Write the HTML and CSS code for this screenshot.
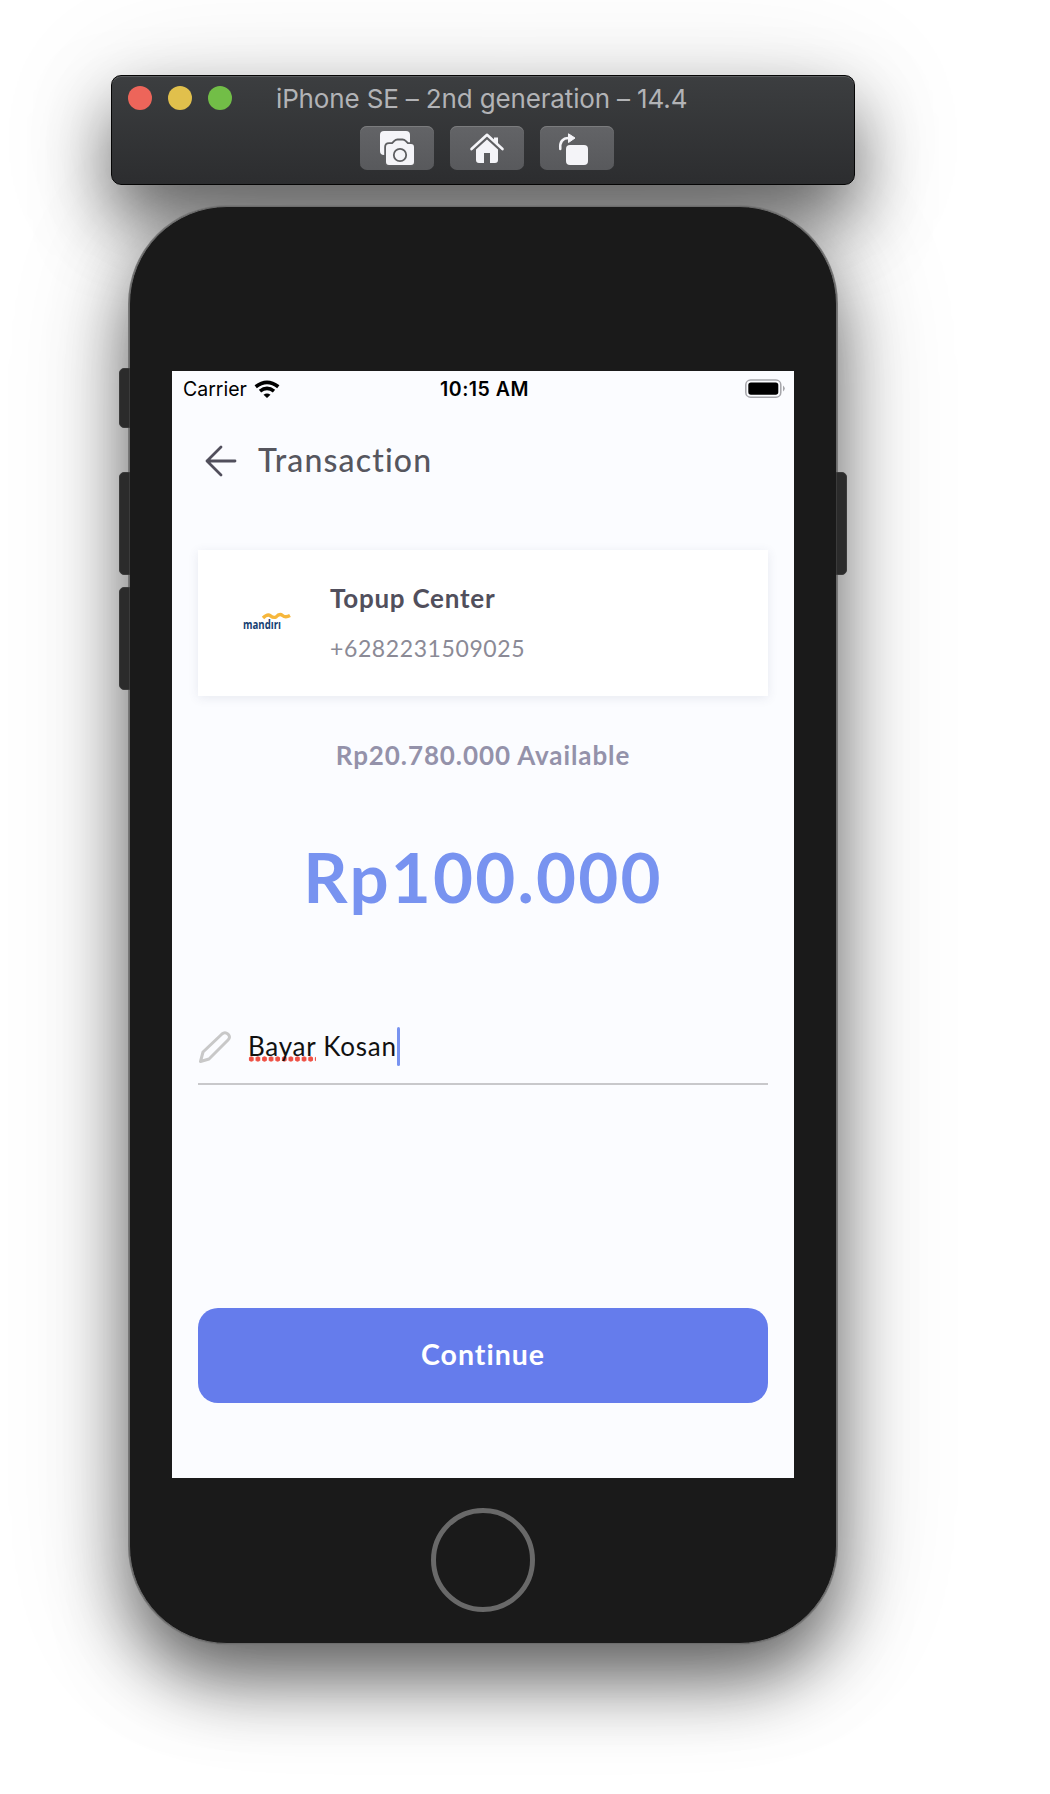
FILE: index.html
```html
<!DOCTYPE html>
<html lang="id">
<head>
<meta charset="utf-8">
<title>Transaction</title>
<link rel="stylesheet" href="styles.css">
</head>
<body>
<main class="simulator">
  <header class="toolbar">
    <div class="titlebar">
      <div class="lights"><i class="light red"></i><i class="light yellow"></i><i class="light green"></i></div>
      <h1 class="device-name">iPhone SE – 2nd generation – 14.4</h1>
    </div>
    <div class="tools">
      <button class="tool" aria-label="Screenshot">
        <svg width="74" height="44" viewBox="0 0 74 44"><rect x="20" y="5" width="30" height="24" rx="4" fill="#f4f4f8"/><path d="M29 18h3.500l2.500-2.600q1-1 2.500-1h5q1.500 0 2.500 1l2.500 2.600H51q3 0 3 3v15q0 3-3 3H29q-3 0-3-3V21q0-3 3-3z" fill="#f4f4f8" stroke="#5d5e61" stroke-width="3.600" paint-order="stroke"/><circle cx="40" cy="29" r="6.200" fill="none" stroke="#5d5e61" stroke-width="1.800"/></svg>
      </button>
      <button class="tool" aria-label="Home">
        <svg width="74" height="44" viewBox="0 0 74 44"><path d="M21.500 23 37 8.800 52.500 23" fill="none" stroke="#f4f4f8" stroke-width="2.600" stroke-linecap="round" stroke-linejoin="round"/><path d="M44 11.500h4v8l-4-4z" fill="#f4f4f8"/><path d="M26 23.500 37 13.500l11 10V34q0 3-3 3h-5V27h-6v10h-5q-3 0-3-3z" fill="#f4f4f8"/></svg>
      </button>
      <button class="tool" aria-label="Rotate">
        <svg width="74" height="44" viewBox="0 0 74 44"><rect x="26" y="19" width="22" height="20" rx="4" fill="#f4f4f8"/><path d="M20.300 23c-.8-7 2.200-11 8.500-11" fill="none" stroke="#f4f4f8" stroke-width="2.500" stroke-linecap="round"/><path d="M28.500 7.800 35 12l-6.500 4.500z" fill="#f4f4f8" stroke="#f4f4f8" stroke-linejoin="round"/></svg>
      </button>
    </div>
  </header>

  <section class="phone">
    <i class="side-key mute"></i><i class="side-key volume-up"></i><i class="side-key volume-down"></i><i class="side-key power"></i>
    <div class="screen">
      <div class="status">
        <div class="network"><span class="carrier">Carrier</span>
          <svg width="26" height="18" viewBox="0 0 26 18"><g fill="none" stroke="#000" stroke-width="3.700"><path d="M1.700 6.700q11.300-8.700 22.600 0"/><path d="M6 11.100q7-5.500 14 0"/></g><path d="M9.500 14.700q3.500-2.500 7 0L13 17.900z"/></svg>
        </div>
        <span class="time">10:15 AM</span>
        <svg class="battery" width="41" height="20" viewBox="0 0 41 20"><rect x=".8" y="1" width="35" height="17.200" rx="4.800" fill="none" stroke="#a5a5aa" stroke-width="1.500"/><rect x="3.300" y="3.500" width="30" height="12.200" rx="2.600"/><path d="M38 6.500v6q3.600-3 0-6z" fill="#a5a5aa"/></svg>
      </div>
      <div class="app">
        <nav class="nav">
          <svg width="32" height="32" viewBox="0 0 32 32"><path d="M30 16H2M16 2 2 16l14 14" fill="none" stroke="#514f5c" stroke-width="2.800" stroke-linecap="round" stroke-linejoin="round"/></svg>
          <h2 class="page-title">Transaction</h2>
        </nav>
        <article class="card">
          <svg class="bank" width="50" height="20" viewBox="0 0 50 20"><text class="bank-name" x="0" y="16.500" textLength="38" lengthAdjust="spacingAndGlyphs">mandırı</text><path d="M20 6Q24.500 1.500 27.500 3.800T33 5Q36.500 1 39.500 3.500t7.500 0" fill="none" stroke="#f6b73c" stroke-width="3.400"/></svg>
          <div class="payee"><h3 class="payee-name">Topup Center</h3><p class="payee-number">+6282231509025</p></div>
        </article>
        <p class="available">Rp20.780.000 Available</p>
        <p class="amount">Rp100.000</p>
        <div class="note">
          <svg width="34" height="34" viewBox="0 0 34 34"><path d="M2.500 31.500 5 22 24 4Q27 1.400 30 4.200T30 10L11 29z" fill="none" stroke="#c8c8c8" stroke-width="3" stroke-linejoin="round"/></svg>
          <p class="note-text"><span class="misspelled">Bayar</span> Kosan</p><i class="caret"></i>
        </div>
        <button class="continue">Continue</button>
      </div>
    </div>
    <div class="home"></div>
  </section>
</main>
</body>
</html>
```
FILE: styles.css
```css
* { box-sizing: border-box; }
body { margin: 0; height: 1794px; overflow: hidden; background: #fff; font-family: Lato, "Open Sans", sans-serif; }
h1, h2, h3, p { margin: 0; white-space: nowrap; }
button { border: 0; padding: 0; font-family: inherit; }
svg { display: block; flex: none; }

.simulator { isolation: isolate; width: 744px; margin-left: 111px; padding-top: 75px; display: flex; flex-direction: column; align-items: center; gap: 21px; }

.toolbar { width: 744px; height: 110px; border: 1px solid #050505; border-radius: 10px; background: linear-gradient(#3c3e40, #2c2d2f); box-shadow: inset 0 1px #5b5d5f, 0 36px 70px rgba(0,0,0,.58), 0 10px 130px rgba(0,0,0,.12); }
.titlebar { display: flex; align-items: center; height: 44px; padding-left: 16px; }
.lights { display: flex; gap: 16px; width: 148px; }
.light { width: 24px; height: 24px; border-radius: 50%; }
.red { background: #ed655a; }
.yellow { background: #e1c04c; }
.green { background: #72be47; }
.device-name { padding-top: 1px; font: 400 26px/44px Inter, sans-serif; letter-spacing: -.15px; color: #b2b3b6; }
.tools { display: flex; gap: 16px; padding: 6px 0 0 248px; }
.tool { width: 74px; height: 44px; border-radius: 7px; background: linear-gradient(#636467, #58595c); box-shadow: inset 0 1px #7b7c7e; }

.phone { position: relative; width: 708px; height: 1438px; padding: 164px 0 0 42px; border: 1px solid #6c6c6c; border-radius: 98px; background: #1a1a1a; box-shadow: 0 0 0 1px #777; }
/* The cast shadow sits beneath the toolbar as well as the phone. */
.phone::before { content: ""; position: absolute; z-index: -1; inset: 0; border-radius: 98px; box-shadow: 0 36px 70px rgba(0,0,0,.58), 0 10px 130px rgba(0,0,0,.16); }
.side-key { position: absolute; width: 11px; height: 103px; background: #2b2b2b; border: 1px solid #3b3b3b; left: -11px; border-radius: 5px 0 0 5px; }
.mute { top: 161px; height: 60px; }
.volume-up { top: 265px; }
.volume-down { top: 380px; }
.power { top: 265px; left: 706px; border-radius: 0 5px 5px 0; }

.screen { width: 622px; height: 1107px; background: #fbfcff; }
.status { display: grid; grid-template-columns: 1fr auto 1fr; align-items: center; height: 34px; padding: 0 8px 0 11px; font: 400 19.500px/34px Inter, sans-serif; color: #000; }
.network { display: flex; align-items: center; gap: 7px; }
.time { padding-top: 1px; font-weight: 600; letter-spacing: .5px; }
.battery { justify-self: end; }

.app { display: flex; flex-direction: column; padding: 0 26px; }
.nav { display: flex; align-items: center; gap: 21px; height: 60px; margin-top: 26px; padding-left: 7px; }
.page-title { margin-top: -2px; font-size: 32px; font-weight: 500; line-height: 60px; color: #56565e; letter-spacing: 1.15px; }
.card { display: flex; height: 146px; margin-top: 59px; padding: 31px 0 0 45px; background: #fff; box-shadow: 0 2px 10px rgba(60,70,110,.1); }
.bank { margin: 31px 37px 0 0; }
.bank-name { font: 700 12.500px "Open Sans", sans-serif; fill: #173f72; }
.payee-name { font-size: 26px; font-weight: 700; line-height: 34px; color: #514f5c; letter-spacing: .75px; }
.payee-number { margin-top: 16px; font-size: 23px; line-height: 34px; color: #8b8a96; letter-spacing: .6px; }
.available { margin-top: 42px; font-size: 26px; font-weight: 700; line-height: 34px; text-align: center; color: #9492aa; letter-spacing: .9px; }
.amount { margin-top: 60px; font-size: 69px; font-weight: 700; line-height: 90px; text-align: center; color: #7893f0; letter-spacing: 2.200px; }
.note { display: flex; align-items: center; height: 75px; margin-top: 88px; border-bottom: 2px solid #c8c8cb; }
.note-text { margin: -2px 0 0 16px; font-size: 26px; line-height: 40px; color: #111; letter-spacing: .75px; }
.misspelled { background: radial-gradient(circle at center, #ee5145 2.300px, transparent 2.900px) 0 100% / 6.600px 6px repeat-x; }
.caret { width: 3px; height: 39px; border-radius: 2px; background: #7893f0; }
.continue { height: 95px; margin-top: 223px; padding-bottom: 4px; border-radius: 20px; background: #657cec; color: #fff; font-size: 28.500px; font-weight: 700; letter-spacing: 1px; }
.home { width: 104px; height: 104px; margin: 30px 0 0 259px; border: 5px solid #696969; border-radius: 50%; }
```
